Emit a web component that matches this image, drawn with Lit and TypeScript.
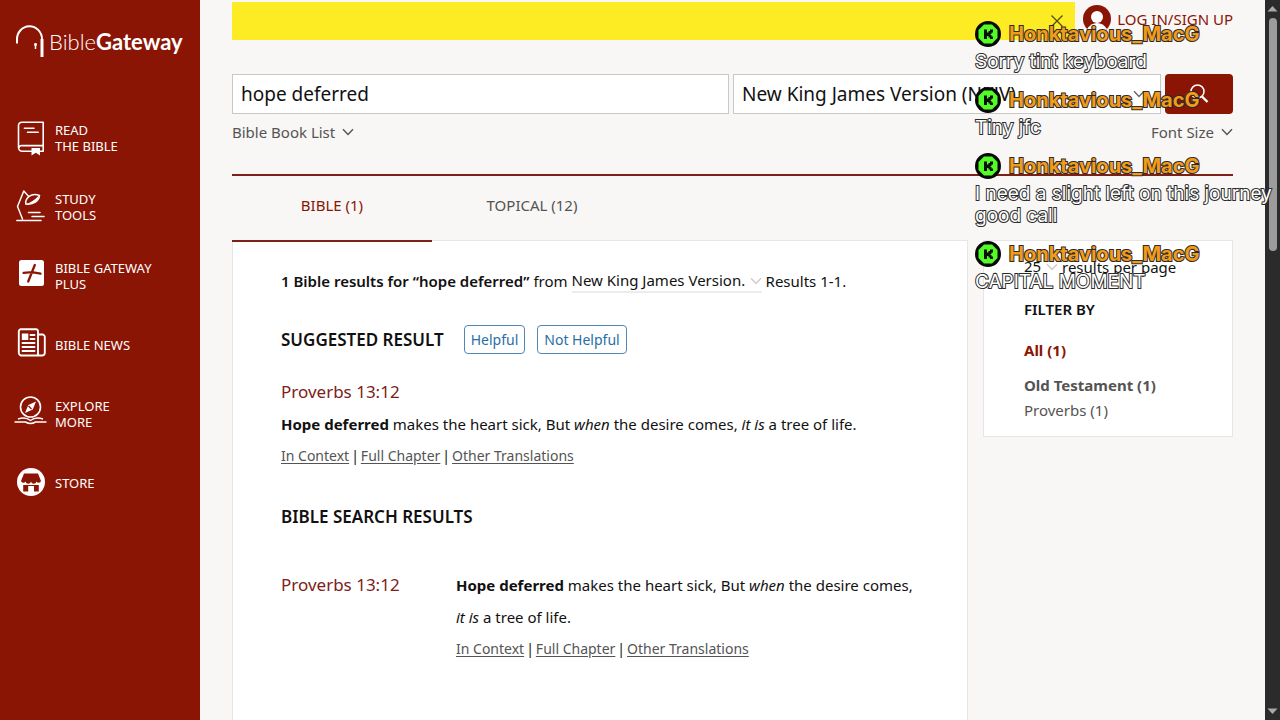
import { LitElement, html, css, svg } from "lit";
import { customElement } from "lit/decorators.js";

const icons = {
  book: svg`<path d="M6 2.200H27.200V31.200H6.200A3.700 3.700 0 0 1 2.500 27.500V5.800A3.600 3.600 0 0 1 6 2.200Z M27.200 25.600H6.400a3.600 3.600 0 0 0-3.800 2.400 M8.400 8.200H18 M11.500 12.200H22.200" fill="none" stroke="currentColor" stroke-width="1.600" stroke-linecap="round" stroke-linejoin="round"/><path d="M15.500 28h8.500v7.500l-4.200-2.800-4.300 2.800z" fill="currentColor"/>`,
  lamp: svg`<path d="M6.500 30L1.500 17.500 7.800 2 12.500 7.200 M0.800 31.500H25 M12.500 23.500H24 M16 27.500H28" fill="none" stroke="currentColor" stroke-width="1.500" stroke-linecap="round" stroke-linejoin="round"/><path d="M9.800 15C9 9 15 3.500 23.500 6.500C23 12 17.500 16 9.800 15Z" fill="none" stroke="currentColor" stroke-width="1.500"/><path d="M9.800 15Q16 13.800 23 6.600Q22.500 15.500 9.800 15Z" fill="currentColor"/>`,
  plus: svg`<rect x="3" y="2" width="25" height="26" rx="2.500" fill="currentColor"/><path d="M18.800 7L12.200 23.500 M7.500 14.800Q16 13.800 24.500 15.700" fill="none" stroke="#8a1505" stroke-width="2.300" stroke-linecap="round"/>`,
  news: svg`<path d="M4.800 2.200H20A2 2 0 0 1 22 4.200V28.500H4.800A2.800 2.800 0 0 1 2.800 26V4.700A2.600 2.600 0 0 1 4.800 2.200Z M22 7.500H26A2.500 2.500 0 0 1 28.800 10V26A2.800 2.800 0 0 1 26 28.500H22 M14.500 8H18.500 M14.500 12H18.500 M6.500 16H18.500 M6.500 20H18.500 M6.500 24H18.500" fill="none" stroke="currentColor" stroke-width="1.900" stroke-linecap="round"/><path d="M5.800 6.500h6.500v6.500H5.800z" fill="currentColor"/>`,
  compass: svg`<circle cx="14.500" cy="11" r="10" fill="none" stroke="currentColor" stroke-width="1.600"/><path d="M20 5.500L16.800 13.500 9 17 12.300 9Z" fill="currentColor"/><path d="M12.500 10L15.500 13" stroke="#8a1505" stroke-width="1.200"/><path d="M-1.500 26H9.500Q14.500 29 19.500 26H30.500 M2 23Q9.500 20.500 14.500 24.500Q19.500 20.500 27 23" fill="none" stroke="currentColor" stroke-width="1.500"/>`,
  store: svg`<circle cx="15" cy="17" r="14" fill="currentColor"/><path d="M8 8.500H22L25 16A2.500 2.500 0 0 1 20.500 16.500 2.800 2.800 0 0 1 15 16.500 2.800 2.800 0 0 1 9.500 16.500 2.500 2.500 0 0 1 5 16Z M7.200 20H22.800V26.500H18V21H12.200V26.500H7.200Z" fill="#8a1505"/>`,
};

const nav = [
  { icon: icons.book, lines: ["READ", "THE BIBLE"] },
  { icon: icons.lamp, lines: ["STUDY", "TOOLS"] },
  { icon: icons.plus, lines: ["BIBLE GATEWAY", "PLUS"] },
  { icon: icons.news, lines: ["BIBLE NEWS"] },
  { icon: icons.compass, lines: ["EXPLORE", "MORE"] },
  { icon: icons.store, lines: ["STORE"] },
];

const messages = [
  "Sorry tint keyboard",
  "Tiny jfc",
  "I need a slight left on this journey good call",
  "CAPITAL MOMENT",
];

const chevron = html`<svg class="chevron" viewBox="0 0 12 8" aria-hidden="true">
  <path d="M1 1.200L6 6.400L11 1.200" fill="none" stroke="currentColor" stroke-width="1.400" />
</svg>`;

@customElement("side-nav")
class SideNav extends LitElement {
  static styles = css`
    :host {
      display: block;
      background: #8a1505;
      color: #fff;
    }
    .logo {
      display: flex;
      align-items: center;
      gap: 4px;
      height: 34px;
      margin: 25px 0 44px 15px;
      color: inherit;
      text-decoration: none;
      font: 300 22px/34px Lato, sans-serif;
    }
    .logo svg {
      width: 30px;
      height: 34px;
    }
    .logo b {
      font-weight: 700;
    }
    .item {
      display: grid;
      grid-template-columns: 32px 1fr;
      align-items: center;
      gap: 7px;
      height: 69px;
      padding-left: 16px;
      color: inherit;
      text-decoration: none;
      font-size: 13px;
      line-height: 16px;
    }
    .item svg {
      width: 32px;
      height: 36px;
      overflow: visible;
    }
    .line {
      display: block;
    }
  `;

  render() {
    return html`
      <a class="logo" href="#">
        <svg viewBox="0 0 30 34" fill="none" stroke="currentColor" aria-hidden="true">
          <path d="M2 18.500V14.500A12.500 13 0 0 1 27 14V32" stroke-width="2" />
          <path d="M27 14V32" stroke-width="3" />
          <path d="M20.500 18V24" stroke-width="1.500" />
          <circle cx="20.500" cy="19.500" r="1.500" fill="currentColor" stroke="none" />
        </svg>
        <span>Bible<b>Gateway</b></span>
      </a>
      <nav>
        ${nav.map(
          (n) => html`<a class="item" href="#">
            <svg viewBox="0 0 32 36" aria-hidden="true">${n.icon}</svg>
            <span>${n.lines.map((l) => html`<span class="line">${l}</span>`)}</span>
          </a>`
        )}
      </nav>
    `;
  }
}

@customElement("chat-overlay")
class ChatOverlay extends LitElement {
  static styles = css`
    :host {
      position: absolute;
      top: 17px;
      right: 0;
      width: 305px;
      display: flex;
      flex-direction: column;
      gap: 10px;
      pointer-events: none;
      font: 400 19px/22px Inter, sans-serif;
      color: #fff;
      -webkit-text-stroke: 2px #2b2b2b;
      paint-order: stroke fill;
    }
    .who {
      display: flex;
      align-items: center;
      gap: 8px;
      height: 34px;
      font-size: 20px;
      font-weight: 700;
      color: #f29b18;
    }
    .who svg {
      width: 26px;
      height: 26px;
    }
    .text {
      margin: 0;
    }
  `;

  render() {
    return messages.map(
      (m) => html`<article>
        <div class="who">
          <svg viewBox="0 0 26 26" aria-hidden="true">
            <circle cx="13" cy="13" r="13" fill="#050805" />
            <path d="M9 3.500H17L22.500 9V17L17 22.500H9L3.500 17V9Z" fill="#53fc28" />
            <path d="M9 8.500h3v3h1.500v-1.500h1.500v-1.500h3v3h-1.500v1.500h-1v1h1v1.500h1.500v2.500h-3v-1.500h-1.500v-1.500h-1.500v3h-3z" fill="#061006" />
          </svg>
          <span>Honktavious_MacG</span>
        </div>
        <p class="text">${m}</p>
      </article>`
    );
  }
}

@customElement("app-root")
class AppRoot extends LitElement {
  static styles = css`
    :host {
      display: grid;
      grid-template-columns: 200px 1fr 15px;
      position: relative;
      height: 100vh;
      overflow: hidden;
      background: #f8f7f5;
      color: #111;
      font: 15px/32px "Noto Sans", "Open Sans", sans-serif;
    }
    *,
    *::before {
      box-sizing: border-box;
    }
    main {
      display: flex;
      flex-direction: column;
      min-width: 0;
      padding: 2px 32px 0;
    }
    button,
    input,
    select {
      font: inherit;
      color: inherit;
      margin: 0;
    }
    a {
      color: inherit;
    }
    .chevron {
      width: 12px;
      height: 8px;
      flex: none;
    }
    .top {
      display: flex;
      gap: 8px;
      height: 38px;
    }
    .banner {
      flex: 1;
      display: flex;
      justify-content: flex-end;
      align-items: center;
      padding-right: 11px;
      background: #fdec24;
    }
    .close {
      display: flex;
      padding: 0;
      border: 0;
      background: none;
    }
    .close svg {
      width: 14px;
      height: 14px;
    }
    .account {
      display: flex;
      align-items: center;
      gap: 6px;
      height: 34px;
      color: #8a1505;
      text-decoration: none;
    }
    .account svg {
      width: 28px;
      height: 28px;
    }
    .search {
      display: grid;
      grid-template-columns: 497fr 428fr 68px;
      gap: 4px;
      margin-top: 34px;
      height: 40px;
    }
    .field {
      width: 100%;
      height: 40px;
      padding: 0 8px;
      border: 1px solid #c8c8c8;
      border-radius: 0;
      background: #fff;
      font-size: 19px;
    }
    .pick {
      display: inline-grid;
      align-items: center;
    }
    .pick > * {
      grid-area: 1 / 1;
    }
    .pick select {
      appearance: none;
    }
    .pick .chevron {
      justify-self: end;
      pointer-events: none;
    }
    .version .chevron {
      margin-right: 16px;
      color: #666;
    }
    .go {
      display: grid;
      place-items: center;
      border: 0;
      border-radius: 4px;
      background: #8a1505;
      color: #fff;
    }
    .go svg {
      width: 20px;
      height: 20px;
    }
    .tools {
      display: flex;
      justify-content: space-between;
      height: 62px;
      padding-top: 2px;
      border-bottom: 2px solid #7c2118;
      color: #545454;
    }
    .tool {
      display: flex;
      align-items: center;
      gap: 7px;
      height: 32px;
      padding: 0;
      border: 0;
      background: none;
    }
    .tabs {
      display: flex;
      position: relative;
      z-index: 1;
      height: 66px;
    }
    .tab {
      width: 200px;
      padding: 0 0 6px;
      border: 0;
      border-bottom: 2px solid transparent;
      background: none;
      color: #545454;
    }
    .tab.active {
      color: #8a1505;
      border-color: #7c2118;
    }
    .columns {
      flex: 1;
      display: grid;
      grid-template-columns: 1fr 250px;
      align-items: start;
      gap: 15px;
      margin-top: -2px;
    }
    .card {
      background: #fff;
      border: 1px solid #e6e6e6;
    }
    .results {
      height: 100%;
      border-bottom: 0;
      padding: 24px 48px 0;
    }
    .summary {
      display: flex;
      align-items: center;
      gap: 4px;
      margin: 0;
      white-space: nowrap;
    }
    .summary b {
      font-weight: 600;
    }
    .inline select {
      padding: 0;
      border: 0;
      border-bottom: 2px solid #ececec;
      border-radius: 0;
      background: none;
      height: 24px;
      line-height: 22px;
    }
    .inline .chevron {
      color: #ccc;
    }
    .from select {
      width: 190px;
    }
    .count select {
      width: 34px;
      border-color: transparent;
    }
    .suggest {
      display: flex;
      align-items: center;
      gap: 12px;
      margin-top: 28px;
    }
    h2 {
      margin: 0;
      font-size: 17px;
      line-height: 28px;
      font-weight: 600;
    }
    .suggest h2 {
      margin-right: 8px;
    }
    .vote {
      height: 29px;
      padding: 0 6px;
      border: 1px solid #4f88b8;
      border-radius: 4px;
      background: #fff;
      color: #2a6ea6;
      font-size: 14px;
      line-height: 27px;
    }
    .ref {
      display: block;
      color: #7c2118;
      font-size: 17px;
      text-decoration: none;
    }
    .first {
      margin-top: 22px;
    }
    .verse {
      margin: 0;
    }
    .links {
      display: flex;
      gap: 2px;
      font-size: 14px;
    }
    .links a {
      color: #545454;
      text-underline-offset: 2px;
    }
    .all {
      margin-top: 31px;
    }
    .hit {
      display: grid;
      grid-template-columns: 175px 1fr;
      margin-top: 38px;
    }
    .filters {
      padding: 10px 40px 13px;
    }
    .per {
      display: flex;
      align-items: center;
      gap: 4px;
      height: 32px;
    }
    .filters h3 {
      margin: 10px 0 13px;
      font-size: 15px;
      font-weight: 600;
      line-height: 32px;
    }
    .filters a {
      display: block;
      line-height: 25px;
      color: #545454;
      text-decoration: none;
    }
    .filters .on {
      margin-bottom: 10px;
      color: #8a1505;
      font-weight: 700;
    }
    .filters .group {
      font-weight: 700;
    }
    .scroll {
      display: flex;
      flex-direction: column;
      align-items: center;
      gap: 4px;
      padding: 4px 0;
      background: #2b2b2b;
    }
    .scroll svg {
      width: 11px;
      height: 10px;
      fill: #a8a8a8;
    }
    .track {
      flex: 1;
      width: 8px;
    }
    .thumb {
      height: 34%;
      border-radius: 4px;
      background: #9c9c9c;
    }
  `;

  private links() {
    return html`<div class="links">
      <a href="#">In Context</a>|<a href="#">Full Chapter</a>|<a href="#">Other Translations</a>
    </div>`;
  }

  private verse() {
    return html`<p class="verse">
      <b>Hope deferred</b> makes the heart sick, But <i>when</i> the desire comes, <i>it is</i> a tree of life.
    </p>`;
  }

  render() {
    return html`
      <side-nav></side-nav>
      <main>
        <div class="top">
          <div class="banner">
            <button class="close" aria-label="Close">
              <svg viewBox="0 0 14 14"><path d="M1.500 1.500L12.500 12.500M12.500 1.500L1.500 12.500" stroke="#554c10" stroke-width="1.300" /></svg>
            </button>
          </div>
          <a class="account" href="#">
            <svg viewBox="0 0 28 28" aria-hidden="true">
              <circle cx="14" cy="14" r="14" fill="#8a1505" />
              <circle cx="14" cy="12" r="6" fill="#fff" />
              <path d="M4 24Q8 18 14 18T24 24Q19 28 14 28T4 24Z" fill="#fff" />
            </svg>
            LOG IN/SIGN UP
          </a>
        </div>
        <form class="search">
          <input class="field" aria-label="Search" .value=${"hope deferred"} />
          <div class="pick version">
            <select class="field" aria-label="Version"><option>New King James Version (NKJV)</option></select>
            ${chevron}
          </div>
          <button class="go" type="button" aria-label="Search">
            <svg viewBox="0 0 20 20" fill="none" stroke="currentColor"><circle cx="8.500" cy="7.500" r="6.500" stroke-width="1.500" /><path d="M13 12.500L18.500 18" stroke-width="2.400" /></svg>
          </button>
        </form>
        <div class="tools">
          <button class="tool">Bible Book List ${chevron}</button>
          <button class="tool">Font Size ${chevron}</button>
        </div>
        <div class="tabs">
          <button class="tab active">BIBLE (1)</button>
          <button class="tab">TOPICAL (12)</button>
        </div>
        <div class="columns">
          <section class="card results">
            <div class="summary">
              <b>1 Bible results for “hope deferred”</b> from
              <span class="pick inline from">
                <select aria-label="Translation"><option>New King James Version.</option></select>
                ${chevron}
              </span>
              Results 1-1.
            </div>
            <div class="suggest">
              <h2>SUGGESTED RESULT</h2>
              <button class="vote">Helpful</button>
              <button class="vote">Not Helpful</button>
            </div>
            <a class="ref first" href="#">Proverbs 13:12</a>
            ${this.verse()} ${this.links()}
            <h2 class="all">BIBLE SEARCH RESULTS</h2>
            <div class="hit">
              <a class="ref" href="#">Proverbs 13:12</a>
              <div>${this.verse()} ${this.links()}</div>
            </div>
          </section>
          <aside class="card filters">
            <div class="per">
              <span class="pick inline count">
                <select id="count"><option>25</option></select>
                ${chevron}
              </span>
              <label for="count">results per page</label>
            </div>
            <h3>FILTER BY</h3>
            <a class="on" href="#">All (1)</a>
            <a class="group" href="#">Old Testament (1)</a>
            <a href="#">Proverbs (1)</a>
          </aside>
        </div>
      </main>
      <div class="scroll" aria-hidden="true">
        <svg viewBox="0 0 11 10"><path d="M0.500 7.500L5.500 2L10.500 7.500Z" /></svg>
        <div class="track"><div class="thumb"></div></div>
        <svg viewBox="0 0 11 10"><path d="M0.500 2.500L5.500 8L10.500 2.500Z" /></svg>
      </div>
      <chat-overlay></chat-overlay>
    `;
  }
}
